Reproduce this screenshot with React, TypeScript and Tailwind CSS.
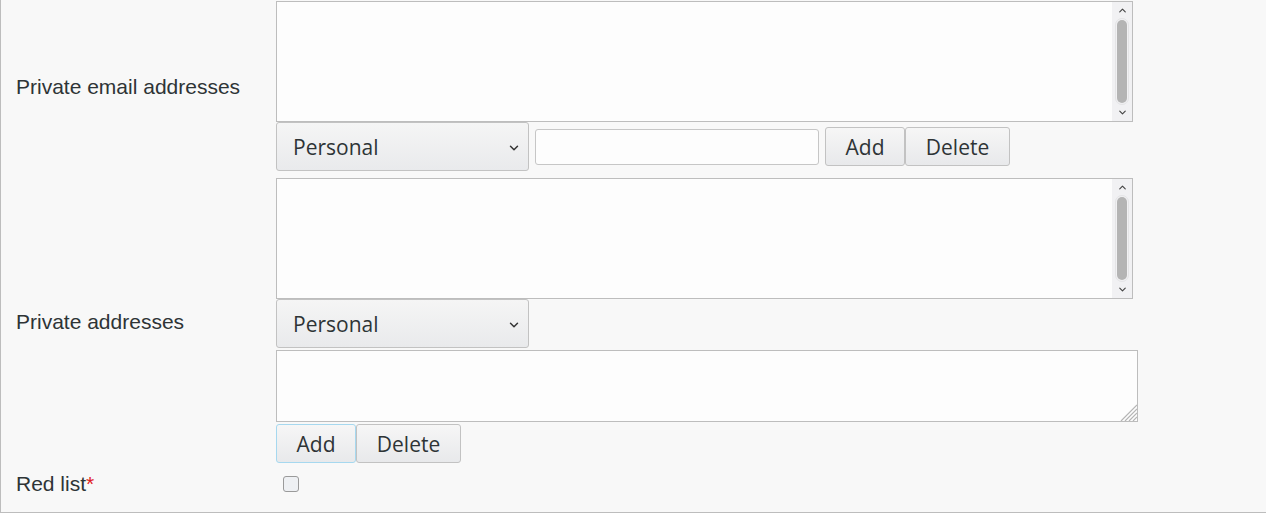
import { ChevronDown, ChevronUp } from 'lucide-react'

const label = "text-[21px] text-[#2e3436] [font-family:'Liberation_Sans',Arial,sans-serif]"
const ui = "[font-family:'Open_Sans','Noto_Sans',sans-serif] text-[21px] text-[#2e3436]"
const btn =
  'h-[39px] rounded-[3px] border bg-gradient-to-b from-[#f6f6f6] to-[#e8e9eb] pt-[2px] leading-none'

function ListBox() {
  return (
    <div className="flex h-[121px] w-[857px] border border-[#bdbdbd] bg-[#fdfdfd]">
      <div className="flex-1" />
      <div className="flex w-[20px] flex-col items-center bg-[#f1f1f3] py-[3px]">
        <ChevronUp size={11} strokeWidth={2.5} className="text-[#444]" />
        <div className="mt-[2px] w-[14px] flex-1 rounded-full border border-[#e4e4e6] p-[1px]">
          <div className="h-full w-full rounded-full bg-[#b4b4b4]" />
        </div>
        <ChevronDown size={11} strokeWidth={2.5} className="mt-[2px] text-[#444]" />
      </div>
    </div>
  )
}

function Select() {
  return (
    <div
      className={`${ui} flex h-[49px] w-[253px] items-center justify-between rounded-[3px] border border-[#c2c2c2] bg-gradient-to-b from-[#f5f5f5] to-[#e9eaec] pl-[16px] pr-[7px] pt-[2px]`}
    >
      <span>Personal</span>
      <ChevronDown size={14} strokeWidth={2.5} className="text-[#333]" />
    </div>
  )
}

function Grip() {
  return (
    <svg width="18" height="18" viewBox="0 0 18 18" className="absolute bottom-0 right-0">
      <path d="M18 2 L2 18 M18 6 L6 18 M18 10 L10 18 M18 14 L14 18" stroke="#b5b5b5" strokeWidth="1.2" />
    </svg>
  )
}

export default function App() {
  return (
    <div className="h-[513px] w-[1266px] border-b border-l border-[#bdbdbd] bg-[#f8f8f8]">
      <div className="grid grid-cols-[275px_1fr]">
        {/* private email addresses */}
        <div className={`${label} flex items-center pl-[15px] pt-[3px]`}>Private email addresses</div>
        <div className="flex flex-col pt-px">
          <ListBox />
          <div className="flex items-center">
            <Select />
            <input className="ml-[6px] h-[36px] w-[284px] rounded-[3px] border border-[#c6c6c6] bg-[#fdfdfd]" />
            <button className={`${ui} ${btn} ml-[6px] w-[80px] border-[#c2c2c2]`}>Add</button>
            <button className={`${ui} ${btn} w-[105px] border-[#c2c2c2]`}>Delete</button>
          </div>
        </div>

        {/* private addresses */}
        <div className={`${label} mt-[7px] flex items-center pl-[15px] pt-[2px]`}>Private addresses</div>
        <div className="mt-[7px] flex flex-col">
          <ListBox />
          <Select />
          <div className="relative mt-[2px] h-[72px] w-[862px] border border-[#bdbdbd] bg-[#fdfdfd]">
            <Grip />
          </div>
          <div className="mt-[2px] flex">
            <button className={`${ui} ${btn} w-[80px] border-[#a6d8ef]`}>Add</button>
            <button className={`${ui} ${btn} w-[105px] border-[#c2c2c2]`}>Delete</button>
          </div>
        </div>

        {/* red list */}
        <div className={`${label} flex h-[42px] items-center pl-[15px]`}>
          Red list<span className="text-[#e01b24]">*</span>
        </div>
        <div className="flex h-[42px] items-center pl-[7px]">
          <div className="h-[16px] w-[16px] rounded-[3px] border border-[#9a9a9a] bg-[#eef0f3]" />
        </div>
      </div>
    </div>
  )
}
